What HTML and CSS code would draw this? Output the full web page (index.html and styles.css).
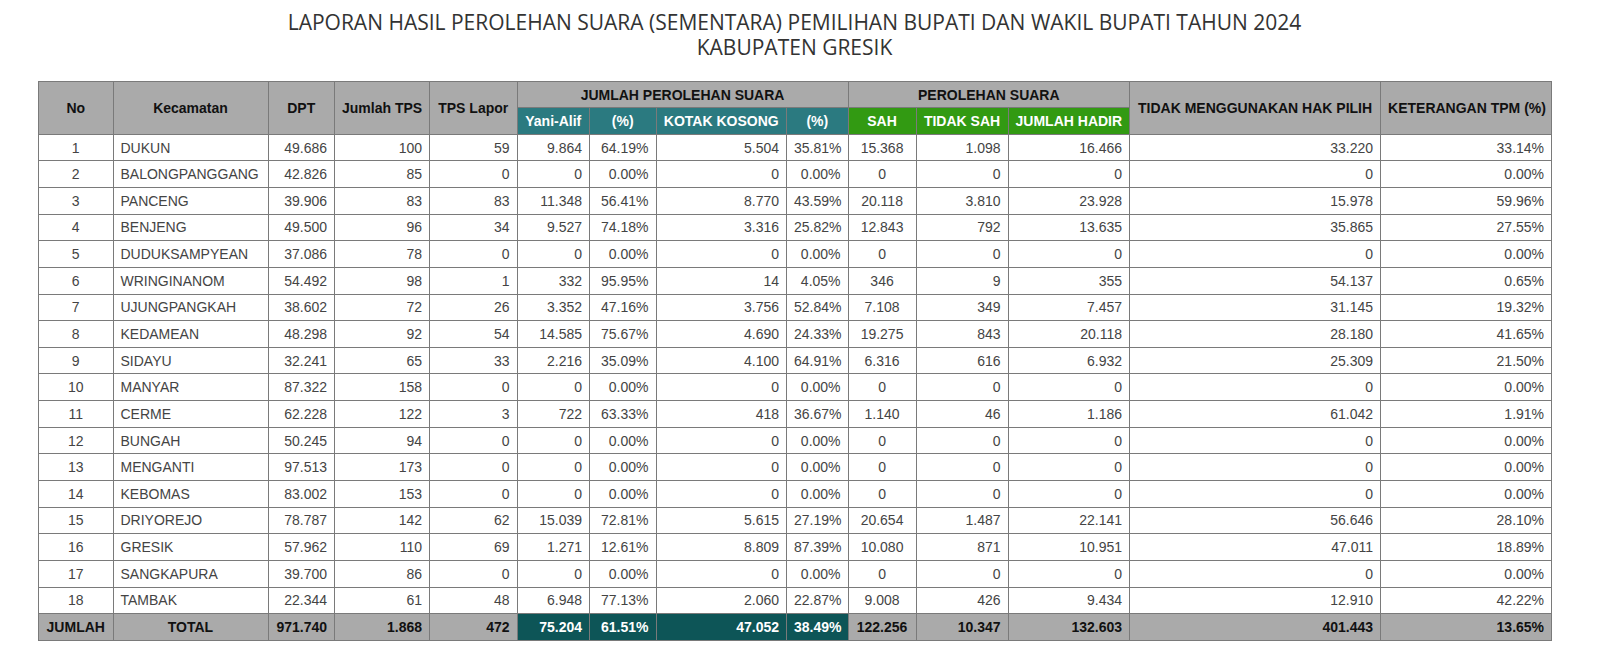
FILE: index.html
```html
<!DOCTYPE html>
<html>
<head>
<meta charset="utf-8">
<link rel="stylesheet" href="styles.css">
</head>
<body>
<div class="wrap">
  <h1 class="title">LAPORAN HASIL PEROLEHAN SUARA (SEMENTARA) PEMILIHAN BUPATI DAN WAKIL BUPATI TAHUN 2024<br>KABUPATEN GRESIK</h1>
  <table class="report">
    <colgroup>
      <col class="c-no"><col class="c-kec"><col class="c-dpt"><col class="c-jtps"><col class="c-tpsl">
      <col class="c-yani"><col class="c-p1"><col class="c-kk"><col class="c-p2">
      <col class="c-sah"><col class="c-ts"><col class="c-jh"><col class="c-tm"><col class="c-ket">
    </colgroup>
    <thead>
      <tr class="h1">
        <th rowspan="2">No</th>
        <th rowspan="2">Kecamatan</th>
        <th rowspan="2">DPT</th>
        <th rowspan="2">Jumlah TPS</th>
        <th rowspan="2">TPS Lapor</th>
        <th colspan="4">JUMLAH PEROLEHAN SUARA</th>
        <th colspan="3">PEROLEHAN SUARA</th>
        <th rowspan="2">TIDAK MENGGUNAKAN HAK PILIH</th>
        <th rowspan="2">KETERANGAN TPM (%)</th>
      </tr>
      <tr class="h2">
        <th class="teal">Yani-Alif</th>
        <th class="teal">(%)</th>
        <th class="teal">KOTAK KOSONG</th>
        <th class="teal">(%)</th>
        <th class="green">SAH</th>
        <th class="green">TIDAK SAH</th>
        <th class="green">JUMLAH HADIR</th>
      </tr>
    </thead>
    <tbody>
      <tr><td class="ctr">1</td><td>DUKUN</td><td class="r">49.686</td><td class="r">100</td><td class="r">59</td><td class="r">9.864</td><td class="r">64.19%</td><td class="r">5.504</td><td class="r">35.81%</td><td class="ctr">15.368</td><td class="r">1.098</td><td class="r">16.466</td><td class="r">33.220</td><td class="r">33.14%</td></tr>
      <tr><td class="ctr">2</td><td>BALONGPANGGANG</td><td class="r">42.826</td><td class="r">85</td><td class="r">0</td><td class="r">0</td><td class="r">0.00%</td><td class="r">0</td><td class="r">0.00%</td><td class="ctr">0</td><td class="r">0</td><td class="r">0</td><td class="r">0</td><td class="r">0.00%</td></tr>
      <tr><td class="ctr">3</td><td>PANCENG</td><td class="r">39.906</td><td class="r">83</td><td class="r">83</td><td class="r">11.348</td><td class="r">56.41%</td><td class="r">8.770</td><td class="r">43.59%</td><td class="ctr">20.118</td><td class="r">3.810</td><td class="r">23.928</td><td class="r">15.978</td><td class="r">59.96%</td></tr>
      <tr><td class="ctr">4</td><td>BENJENG</td><td class="r">49.500</td><td class="r">96</td><td class="r">34</td><td class="r">9.527</td><td class="r">74.18%</td><td class="r">3.316</td><td class="r">25.82%</td><td class="ctr">12.843</td><td class="r">792</td><td class="r">13.635</td><td class="r">35.865</td><td class="r">27.55%</td></tr>
      <tr><td class="ctr">5</td><td>DUDUKSAMPYEAN</td><td class="r">37.086</td><td class="r">78</td><td class="r">0</td><td class="r">0</td><td class="r">0.00%</td><td class="r">0</td><td class="r">0.00%</td><td class="ctr">0</td><td class="r">0</td><td class="r">0</td><td class="r">0</td><td class="r">0.00%</td></tr>
      <tr><td class="ctr">6</td><td>WRINGINANOM</td><td class="r">54.492</td><td class="r">98</td><td class="r">1</td><td class="r">332</td><td class="r">95.95%</td><td class="r">14</td><td class="r">4.05%</td><td class="ctr">346</td><td class="r">9</td><td class="r">355</td><td class="r">54.137</td><td class="r">0.65%</td></tr>
      <tr><td class="ctr">7</td><td>UJUNGPANGKAH</td><td class="r">38.602</td><td class="r">72</td><td class="r">26</td><td class="r">3.352</td><td class="r">47.16%</td><td class="r">3.756</td><td class="r">52.84%</td><td class="ctr">7.108</td><td class="r">349</td><td class="r">7.457</td><td class="r">31.145</td><td class="r">19.32%</td></tr>
      <tr><td class="ctr">8</td><td>KEDAMEAN</td><td class="r">48.298</td><td class="r">92</td><td class="r">54</td><td class="r">14.585</td><td class="r">75.67%</td><td class="r">4.690</td><td class="r">24.33%</td><td class="ctr">19.275</td><td class="r">843</td><td class="r">20.118</td><td class="r">28.180</td><td class="r">41.65%</td></tr>
      <tr><td class="ctr">9</td><td>SIDAYU</td><td class="r">32.241</td><td class="r">65</td><td class="r">33</td><td class="r">2.216</td><td class="r">35.09%</td><td class="r">4.100</td><td class="r">64.91%</td><td class="ctr">6.316</td><td class="r">616</td><td class="r">6.932</td><td class="r">25.309</td><td class="r">21.50%</td></tr>
      <tr><td class="ctr">10</td><td>MANYAR</td><td class="r">87.322</td><td class="r">158</td><td class="r">0</td><td class="r">0</td><td class="r">0.00%</td><td class="r">0</td><td class="r">0.00%</td><td class="ctr">0</td><td class="r">0</td><td class="r">0</td><td class="r">0</td><td class="r">0.00%</td></tr>
      <tr><td class="ctr">11</td><td>CERME</td><td class="r">62.228</td><td class="r">122</td><td class="r">3</td><td class="r">722</td><td class="r">63.33%</td><td class="r">418</td><td class="r">36.67%</td><td class="ctr">1.140</td><td class="r">46</td><td class="r">1.186</td><td class="r">61.042</td><td class="r">1.91%</td></tr>
      <tr><td class="ctr">12</td><td>BUNGAH</td><td class="r">50.245</td><td class="r">94</td><td class="r">0</td><td class="r">0</td><td class="r">0.00%</td><td class="r">0</td><td class="r">0.00%</td><td class="ctr">0</td><td class="r">0</td><td class="r">0</td><td class="r">0</td><td class="r">0.00%</td></tr>
      <tr><td class="ctr">13</td><td>MENGANTI</td><td class="r">97.513</td><td class="r">173</td><td class="r">0</td><td class="r">0</td><td class="r">0.00%</td><td class="r">0</td><td class="r">0.00%</td><td class="ctr">0</td><td class="r">0</td><td class="r">0</td><td class="r">0</td><td class="r">0.00%</td></tr>
      <tr><td class="ctr">14</td><td>KEBOMAS</td><td class="r">83.002</td><td class="r">153</td><td class="r">0</td><td class="r">0</td><td class="r">0.00%</td><td class="r">0</td><td class="r">0.00%</td><td class="ctr">0</td><td class="r">0</td><td class="r">0</td><td class="r">0</td><td class="r">0.00%</td></tr>
      <tr><td class="ctr">15</td><td>DRIYOREJO</td><td class="r">78.787</td><td class="r">142</td><td class="r">62</td><td class="r">15.039</td><td class="r">72.81%</td><td class="r">5.615</td><td class="r">27.19%</td><td class="ctr">20.654</td><td class="r">1.487</td><td class="r">22.141</td><td class="r">56.646</td><td class="r">28.10%</td></tr>
      <tr><td class="ctr">16</td><td>GRESIK</td><td class="r">57.962</td><td class="r">110</td><td class="r">69</td><td class="r">1.271</td><td class="r">12.61%</td><td class="r">8.809</td><td class="r">87.39%</td><td class="ctr">10.080</td><td class="r">871</td><td class="r">10.951</td><td class="r">47.011</td><td class="r">18.89%</td></tr>
      <tr><td class="ctr">17</td><td>SANGKAPURA</td><td class="r">39.700</td><td class="r">86</td><td class="r">0</td><td class="r">0</td><td class="r">0.00%</td><td class="r">0</td><td class="r">0.00%</td><td class="ctr">0</td><td class="r">0</td><td class="r">0</td><td class="r">0</td><td class="r">0.00%</td></tr>
      <tr><td class="ctr">18</td><td>TAMBAK</td><td class="r">22.344</td><td class="r">61</td><td class="r">48</td><td class="r">6.948</td><td class="r">77.13%</td><td class="r">2.060</td><td class="r">22.87%</td><td class="ctr">9.008</td><td class="r">426</td><td class="r">9.434</td><td class="r">12.910</td><td class="r">42.22%</td></tr>
    </tbody>
    <tfoot>
      <tr>
        <td class="ctr">JUMLAH</td>
        <td class="ctr">TOTAL</td>
        <td class="r">971.740</td>
        <td class="r">1.868</td>
        <td class="r">472</td>
        <td class="r dark">75.204</td>
        <td class="r dark">61.51%</td>
        <td class="r dark">47.052</td>
        <td class="r dark">38.49%</td>
        <td class="ctr">122.256</td>
        <td class="r">10.347</td>
        <td class="r">132.603</td>
        <td class="r">401.443</td>
        <td class="r">13.65%</td>
      </tr>
    </tfoot>
  </table>
</div>
</body>
</html>
```

FILE: styles.css
```css
html, body {
  margin: 0;
  padding: 0;
  background: #ffffff;
}

.wrap {
  margin-left: 38px;
  width: 1513px;
  padding-top: 10px;
}

.title {
  margin: 0 0 21px 0;
  font-family: "Open Sans", "Liberation Sans", sans-serif;
  font-weight: 400;
  font-size: 21px;
  line-height: 25px;
  color: #333333;
  text-align: center;
}

.report {
  width: 1513px;
  table-layout: fixed;
  border-collapse: collapse;
  font-family: "Liberation Sans", Arial, sans-serif;
  font-size: 14px;
  color: #444444;
  border: 1px solid #666666;
}

.c-no { width: 74.5px; }
.c-kec { width: 155px; }
.c-dpt { width: 66.5px; }
.c-jtps { width: 95px; }
.c-tpsl { width: 87.5px; }
.c-yani { width: 72.5px; }
.c-p1 { width: 66.5px; }
.c-kk { width: 130.5px; }
.c-p2 { width: 61.5px; }
.c-sah { width: 68px; }
.c-ts { width: 92px; }
.c-jh { width: 121.5px; }
.c-tm { width: 251px; }
.c-ket { width: 171px; }

.report th,
.report td {
  border: 1px solid #7a7a7a;
  padding: 0 7px;
  white-space: nowrap;
  overflow: hidden;
}

.report thead th {
  background: #aaaaaa;
  color: #111111;
  font-weight: 700;
  text-align: center;
}

.report thead .h1 { height: 26px; }
.report thead .h2 { height: 26.7px; }

.report thead th.teal {
  background: #2b7a80;
  color: #ffffff;
}

.report thead th.green {
  background: #329a12;
  color: #ffffff;
}

.report tbody tr { height: 26.65px; }

.report td { text-align: left; }
.report td.r { text-align: right; }
.report td.ctr { text-align: center; }

.report tfoot tr { height: 26.65px; }

.report tfoot td {
  background: #aaaaaa;
  color: #111111;
  font-weight: 700;
  border-top: 1px solid #555555;
}

.report tfoot td.dark {
  background: #0d5557;
  color: #ffffff;
}
```
